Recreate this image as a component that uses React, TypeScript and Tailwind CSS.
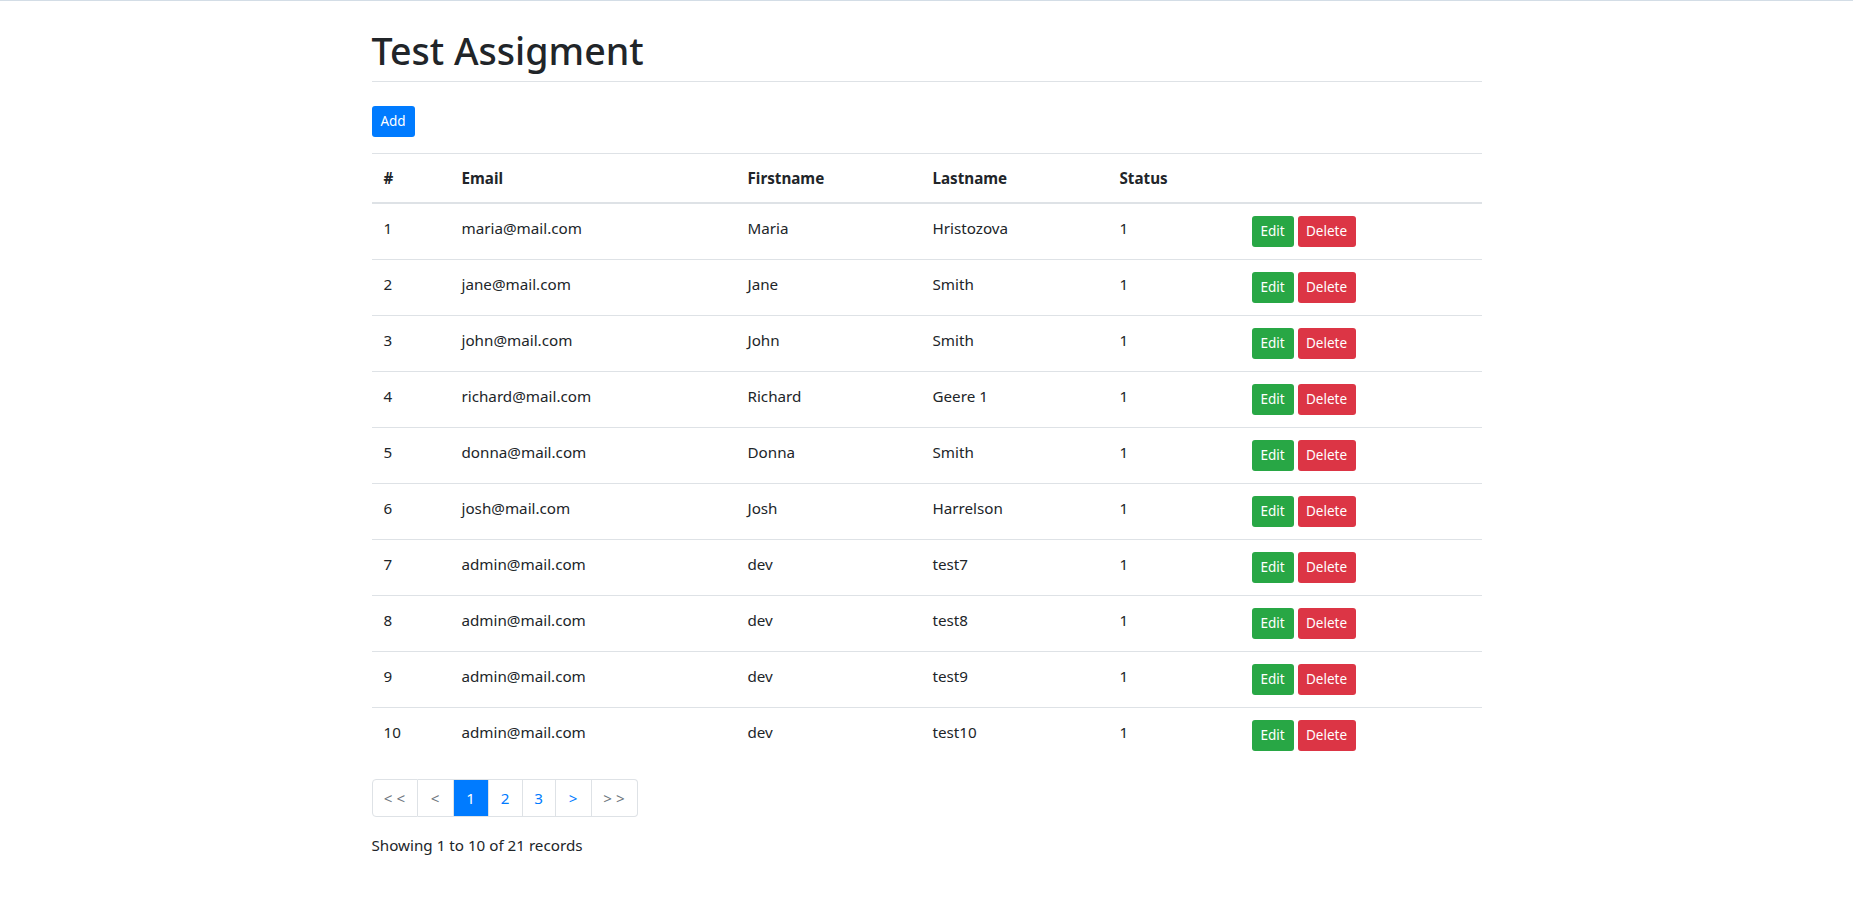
const users = [
  { id: 1, email: "maria@mail.com", firstName: "Maria", lastName: "Hristozova", status: 1 },
  { id: 2, email: "jane@mail.com", firstName: "Jane", lastName: "Smith", status: 1 },
  { id: 3, email: "john@mail.com", firstName: "John", lastName: "Smith", status: 1 },
  { id: 4, email: "richard@mail.com", firstName: "Richard", lastName: "Geere 1", status: 1 },
  { id: 5, email: "donna@mail.com", firstName: "Donna", lastName: "Smith", status: 1 },
  { id: 6, email: "josh@mail.com", firstName: "Josh", lastName: "Harrelson", status: 1 },
  { id: 7, email: "admin@mail.com", firstName: "dev", lastName: "test7", status: 1 },
  { id: 8, email: "admin@mail.com", firstName: "dev", lastName: "test8", status: 1 },
  { id: 9, email: "admin@mail.com", firstName: "dev", lastName: "test9", status: 1 },
  { id: 10, email: "admin@mail.com", firstName: "dev", lastName: "test10", status: 1 },
]

const pages = [
  { label: "< <", w: "w-[46px] border-l rounded-l-[4px]", cls: "text-[#6c757d]" },
  { label: "<", w: "w-[36px]", cls: "text-[#6c757d]" },
  { label: "1", w: "w-[35px]", cls: "bg-[#007bff] border-[#007bff] text-white" },
  { label: "2", w: "w-[34px]", cls: "text-[#007bff]" },
  { label: "3", w: "w-[33px]", cls: "text-[#007bff]" },
  { label: ">", w: "w-[36px]", cls: "text-[#007bff]" },
  { label: "> >", w: "w-[46px] rounded-r-[4px]", cls: "text-[#6c757d]" },
]

const App = () => {
  return (
    <div
      className="min-h-screen bg-white border-t border-[#d3dde6] text-[#212529] text-[15.2px]"
      style={{ fontFamily: '"Noto Sans", "Open Sans", sans-serif' }}
    >
      <div className="w-[1140px] mx-auto px-[15px]">
        <h1 className="pt-[26px] pb-[6px] text-[37.6px] leading-[48px] font-medium border-b border-[#dee2e6]">
          Test Assigment
        </h1>

        <div className="mt-[24px]">
          <button className="h-[31px] w-[43px] rounded-[3px] bg-[#007bff] text-white text-[13.5px] leading-[21px]">
            Add
          </button>
        </div>

        <table className="mt-[16px] w-full table-fixed border-collapse border-t border-[#dee2e6]">
          <thead>
            <tr className="border-b-2 border-[#dee2e6]">
              <th className="w-[78px] p-[12px] text-left font-bold leading-[24px]">#</th>
              <th className="w-[286px] p-[12px] text-left font-bold leading-[24px]">Email</th>
              <th className="w-[185px] p-[12px] text-left font-bold leading-[24px]">Firstname</th>
              <th className="w-[187px] p-[12px] text-left font-bold leading-[24px]">Lastname</th>
              <th className="w-[132px] p-[12px] text-left font-bold leading-[24px]">Status</th>
              <th className="w-[242px] p-[12px]"></th>
            </tr>
          </thead>
          <tbody>
            {users.map((u, i) => (
              <tr key={u.id} className={i > 0 ? "border-t border-[#dee2e6]" : ""}>
                <td className="px-[12px] pt-[12px] pb-[12px] align-top leading-[24px]">{u.id}</td>
                <td className="px-[12px] pt-[12px] align-top leading-[24px]">{u.email}</td>
                <td className="px-[12px] pt-[12px] align-top leading-[24px]">{u.firstName}</td>
                <td className="px-[12px] pt-[12px] align-top leading-[24px]">{u.lastName}</td>
                <td className="px-[12px] pt-[12px] align-top leading-[24px]">{u.status}</td>
                <td className="px-[12px] py-[12px] align-top">
                  <div className="flex gap-[4px]">
                    <button className="h-[31px] w-[42px] rounded-[3px] bg-[#28a745] text-white text-[13.5px] leading-[21px]">
                      Edit
                    </button>
                    <button className="h-[31px] w-[58px] rounded-[3px] bg-[#dc3545] text-white text-[13.5px] leading-[21px]">
                      Delete
                    </button>
                  </div>
                </td>
              </tr>
            ))}
          </tbody>
        </table>

        {/* pagination */}
        <ul className="mt-[16px] flex">
          {pages.map((p) => (
            <li
              key={p.label}
              className={
                "h-[38px] flex items-center justify-center border-y border-r border-[#dee2e6] leading-[20px] " +
                p.w + " " + p.cls
              }
            >
              {p.label}
            </li>
          ))}
        </ul>

        <div className="mt-[16px] leading-[24px]">Showing 1 to 10 of 21 records</div>
      </div>
    </div>
  )
}

export default App
